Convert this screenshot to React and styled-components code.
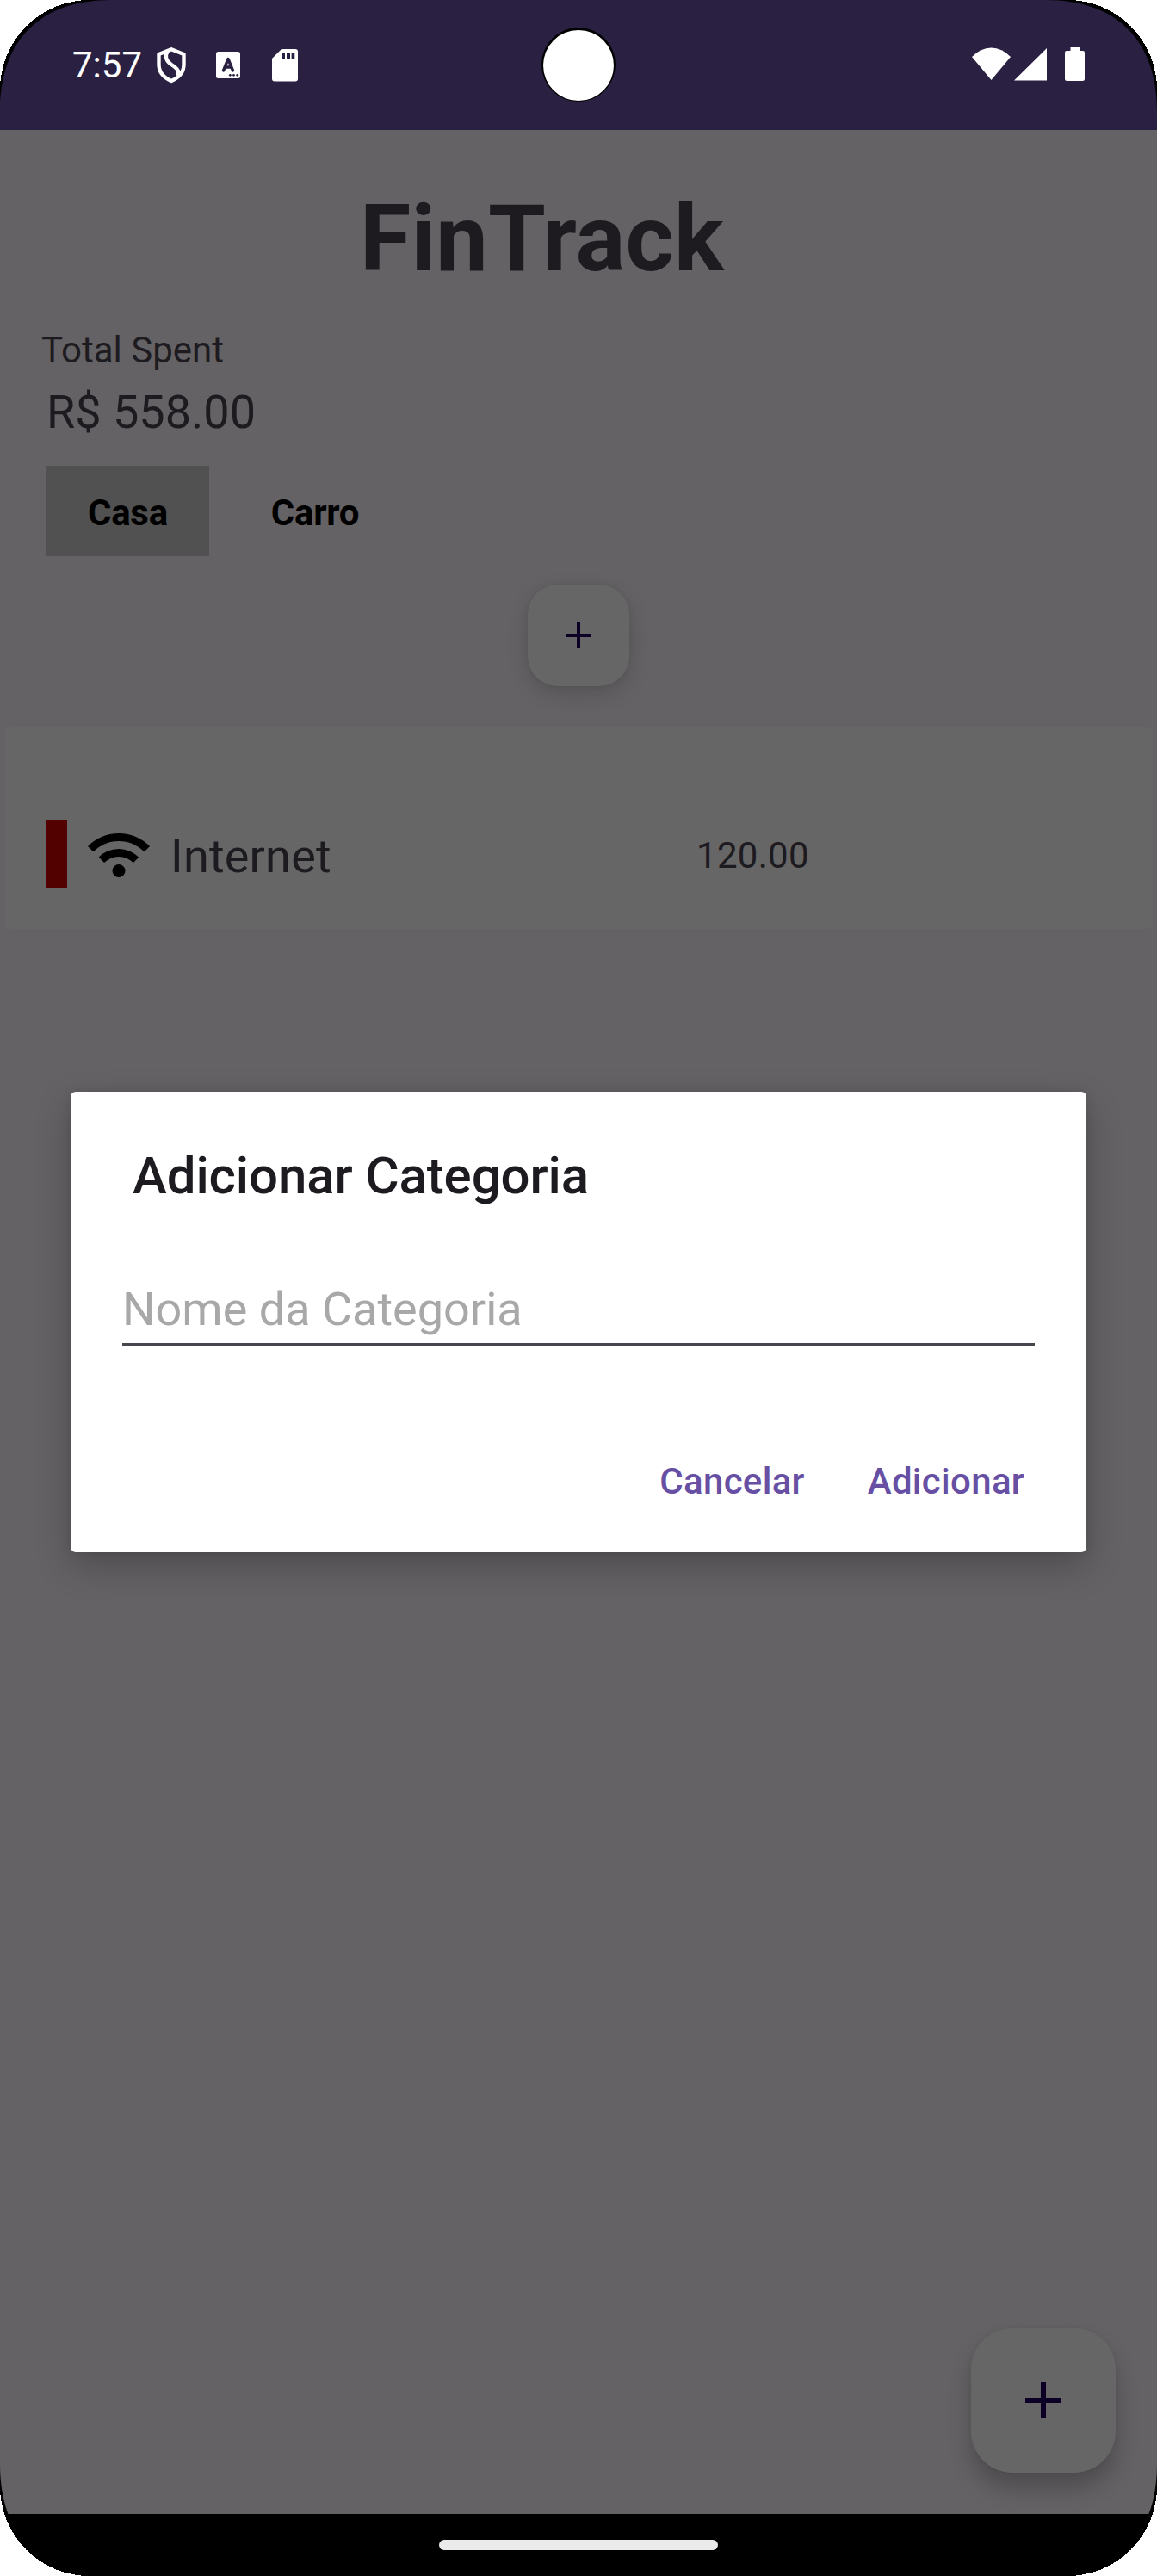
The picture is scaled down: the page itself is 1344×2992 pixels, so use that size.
import React from 'react';
import styled, { createGlobalStyle } from 'styled-components';

const GlobalStyle = createGlobalStyle`
  * { box-sizing: border-box; }
  body { margin: 0; background: #000; font-family: Roboto, "Liberation Sans", sans-serif; }
  button { border: 0; padding: 0; background: none; font: inherit; color: inherit; }
`;

const Device = styled.div`
  position: relative;
  width: 1344px;
  height: 2992px;
  display: flex;
  flex-direction: column;
  overflow: hidden;
  background: #656265;
  color: #1d1b20;
`;

const StatusBar = styled.header`
  height: 151px;
  flex: none;
  display: flex;
  align-items: flex-start;
  justify-content: space-between;
  padding: 50px 84px 0;
  background: #2a2041;
  color: #fff;
`;

const StatusGroup = styled.div`
  display: flex;
  align-items: flex-start;
`;

const Clock = styled.span`
  font-size: 42px;
  line-height: 51px;
  width: 98px;
  white-space: nowrap;
`;

const StatusIcon = styled.svg`
  display: block;
  flex: none;
  width: ${(p) => p.$w}px;
  height: 51px;
  margin-left: ${(p) => p.$gap || 0}px;
  fill: #fff;
`;

const Camera = styled.div`
  position: absolute;
  left: 629px;
  top: 32px;
  width: 86px;
  height: 86px;
  padding: 3px 2px 1px;
  border-radius: 50%;
  background: #000;
  &::after {
    content: '';
    display: block;
    width: 82px;
    height: 82px;
    border-radius: 50%;
    background: #fff;
  }
`;

const Main = styled.main`
  flex: 1;
  display: flex;
  flex-direction: column;
  padding: 63px 6px 0;
`;

const AppTitle = styled.h1`
  margin: 0 0 0 412px;
  font-size: 108px;
  line-height: 126px;
  font-weight: 700;
  letter-spacing: 0.2px;
`;

const TotalLabel = styled.p`
  margin: 42px 0 0 42px;
  font-size: 42px;
  line-height: 50px;
`;

const TotalValue = styled.p`
  margin: 15px 0 0 48px;
  font-size: 54px;
  line-height: 64px;
`;

const Tabs = styled.nav`
  display: flex;
  gap: 24px;
  margin: 30px 0 0 48px;
`;

const Tab = styled.button`
  height: 105px;
  padding: 4px 48px 0;
  font-size: 42px;
  font-weight: 700;
  letter-spacing: -0.3px;
  color: #000;
  background: ${(p) => (p.$active ? '#515151' : 'transparent')};
`;

const AddButton = styled.button`
  display: flex;
  align-items: center;
  justify-content: center;
  width: ${(p) => p.$size}px;
  height: ${(p) => p.$size}px;
  border-radius: ${(p) => p.$radius}px;
  background: #666;
`;

const AddCategory = styled(AddButton)`
  align-self: center;
  margin-top: 33px;
  box-shadow: 0 9px 24px rgba(0, 0, 0, 0.15), 0 0 6px rgba(0, 0, 0, 0.07);
`;

const AddExpense = styled(AddButton)`
  align-self: flex-end;
  margin: auto 42px 48px 0;
  box-shadow: 0 18px 27px rgba(0, 0, 0, 0.23), 0 0 6px rgba(0, 0, 0, 0.04);
`;

const Plus = styled.svg`
  display: block;
  fill: #0d0026;
`;

const Card = styled.section`
  height: 235px;
  margin-top: 47px;
  padding: 109px 48px 0;
  border-radius: 5px;
  background: #666;
`;

const ExpenseRow = styled.div`
  display: flex;
  align-items: center;
  height: 78px;
`;

const Marker = styled.span`
  width: 24px;
  height: 78px;
  margin-right: 24px;
  background: #520000;
`;

const ExpenseName = styled.span`
  width: 635px;
  padding: 6px 0 0 24px;
  font-size: 54px;
  line-height: 64px;
  letter-spacing: 0.2px;
`;

const ExpenseAmount = styled.span`
  padding-top: 4px;
  font-size: 42px;
  line-height: 50px;
  letter-spacing: 0.3px;
`;

const NavBar = styled.footer`
  flex: none;
  height: 72px;
  display: flex;
  justify-content: center;
  padding-top: 30px;
  background: #000;
`;

const Handle = styled.span`
  width: 324px;
  height: 12px;
  border-radius: 6px;
  background: #ebebeb;
`;

const ModalLayer = styled.div`
  position: absolute;
  inset: 0;
  display: flex;
  justify-content: center;
  align-items: flex-start;
  padding-top: 1268px;
`;

const Dialog = styled.div`
  width: 1180px;
  height: 535px;
  padding: 63px 60px 0;
  border-radius: 6px;
  background: #fff;
  box-shadow: 0 16px 42px rgba(0, 0, 0, 0.23), 0 0 12px rgba(0, 0, 0, 0.09);
`;

const DialogTitle = styled.h2`
  margin: 0 0 0 12px;
  font-size: 60px;
  line-height: 70px;
  font-weight: 500;
  letter-spacing: -0.1px;
`;

const Field = styled.div`
  margin-top: 88px;
  padding-bottom: 7px;
  border-bottom: 3px solid #49454f;
  font-size: 54px;
  line-height: 64px;
  color: #a8a8a8;
`;

const Actions = styled.div`
  display: flex;
  justify-content: flex-end;
  gap: 73px;
  margin-top: 133px;
  padding-right: 12px;
`;

const ActionButton = styled.button`
  font-size: 42px;
  line-height: 50px;
  font-weight: 500;
  letter-spacing: 0.3px;
  color: #6750a4;
`;

const Bezel = styled.svg`
  position: absolute;
  left: 0;
  top: 0;
  width: 1344px;
  height: 2992px;
  pointer-events: none;
`;

const CornerShape = ({ transform }) => (
  <g transform={transform}>
    <path fill="#000" d="M0 0H130C46.500 0 0 46.500 0 130Z" />
    <path fill="#fff" shapeRendering="crispEdges" d="M0 0H104A104 104 0 0 0 0 104Z" />
  </g>
);

export default function App() {
  return (
    <>
      <GlobalStyle />
      <Device>
        <StatusBar>
          <StatusGroup>
            <Clock>7:57</Clock>
            <StatusIcon $w={34} viewBox="182 50 34 51">
              <g fill="none" stroke="#fff" strokeWidth="4.4" strokeLinejoin="round">
                <path d="M199 57.3L184.5 63V75C184.5 83 190 90 199 94C208 90 213.500 83 213.500 75V63Z" />
                <path d="M195 59C191 65 193 71 199 75C205 79 209 82 206.500 88" />
              </g>
            </StatusIcon>
            <StatusIcon $w={28} $gap={35} viewBox="251 50 28 51">
              <rect x="251" y="60" width="28" height="31" rx="2.500" />
              <path d="M259.500 82L265 68.500L270.500 82M261.500 78H268.500" fill="none" stroke="#2a2041" strokeWidth="3.400" strokeLinecap="round" strokeLinejoin="round" />
              <g fill="#2a2041">
                <circle cx="267.300" cy="87.300" r="1.400" />
                <circle cx="271.500" cy="87.300" r="1.400" />
                <circle cx="275.700" cy="87.300" r="1.400" />
              </g>
            </StatusIcon>
            <StatusIcon $w={30} $gap={37} viewBox="316 50 30 51">
              <path d="M327 57H343Q346 57 346 60V91.500Q346 94.500 343 94.500H319Q316 94.500 316 91.500V68Z" />
              <path fill="#2a2041" d="M327 61h4v7h-4zM333 61h4v7h-4zM338.600 61h3.700v7h-3.700z" />
            </StatusIcon>
          </StatusGroup>
          <StatusGroup>
            <StatusIcon $w={45} viewBox="1129 50 45 51">
              <path d="M1151.500 93L1129 66Q1139 55.500 1151.500 55.500T1174 66Z" />
            </StatusIcon>
            <StatusIcon $w={38} $gap={4} viewBox="1178 50 38 51">
              <path d="M1216 56V93.500H1178Z" />
            </StatusIcon>
            <StatusIcon $w={23} $gap={21} viewBox="1237 50 23 51">
              <path d="M1243.500 55H1254V59H1258Q1260 59 1260 61V91.500Q1260 94 1257.500 94H1239.500Q1237 94 1237 91.500V61Q1237 59 1239 59H1243.500Z" />
            </StatusIcon>
          </StatusGroup>
        </StatusBar>

        <Main>
          <AppTitle>FinTrack</AppTitle>
          <TotalLabel>Total Spent</TotalLabel>
          <TotalValue>R$ 558.00</TotalValue>
          <Tabs>
            <Tab $active>Casa</Tab>
            <Tab>Carro</Tab>
          </Tabs>
          <AddCategory $size={118} $radius={35} aria-label="Adicionar categoria">
            <Plus width="30" height="30" viewBox="0 0 30 30">
              <path d="M13 0h4v13h13v4H17v13h-4V17H0v-4h13z" />
            </Plus>
          </AddCategory>
          <Card>
            <ExpenseRow>
              <Marker />
              <svg width="72" height="72" viewBox="0 -960 960 960" fill="#000">
                <path d="M480-120q-42 0-71-29t-29-71q0-42 29-71t71-29q42 0 71 29t29 71q0 42-29 71t-71 29ZM254-346l-84-86q59-59 138.500-93.500T480-560q92 0 171.500 35T790-430l-84 84q-44-44-102-69t-124-25q-66 0-124 25t-102 69ZM84-516 0-600q92-94 215-147t265-53q142 0 265 53t215 147l-84 84q-77-77-178.500-120.500T480-680q-116 0-217.500 43.500T84-516Z" />
              </svg>
              <ExpenseName>Internet</ExpenseName>
              <ExpenseAmount>120.00</ExpenseAmount>
            </ExpenseRow>
          </Card>
          <AddExpense $size={168} $radius={48} aria-label="Adicionar gasto">
            <Plus width="42" height="42" viewBox="0 0 42 42">
              <path d="M18 0h6v18h18v6H24v18h-6V24H0v-6h18z" />
            </Plus>
          </AddExpense>
        </Main>

        <NavBar>
          <Handle />
        </NavBar>

        <ModalLayer>
          <Dialog role="dialog">
            <DialogTitle>Adicionar Categoria</DialogTitle>
            <Field>Nome da Categoria</Field>
            <Actions>
              <ActionButton>Cancelar</ActionButton>
              <ActionButton>Adicionar</ActionButton>
            </Actions>
          </Dialog>
        </ModalLayer>

        <Camera />
        <Bezel viewBox="0 0 1344 2992">
          <CornerShape />
          <CornerShape transform="translate(1344 0) scale(-1 1)" />
          <CornerShape transform="translate(0 2992) scale(1 -1)" />
          <CornerShape transform="translate(1344 2992) scale(-1 -1)" />
        </Bezel>
      </Device>
    </>
  );
}
